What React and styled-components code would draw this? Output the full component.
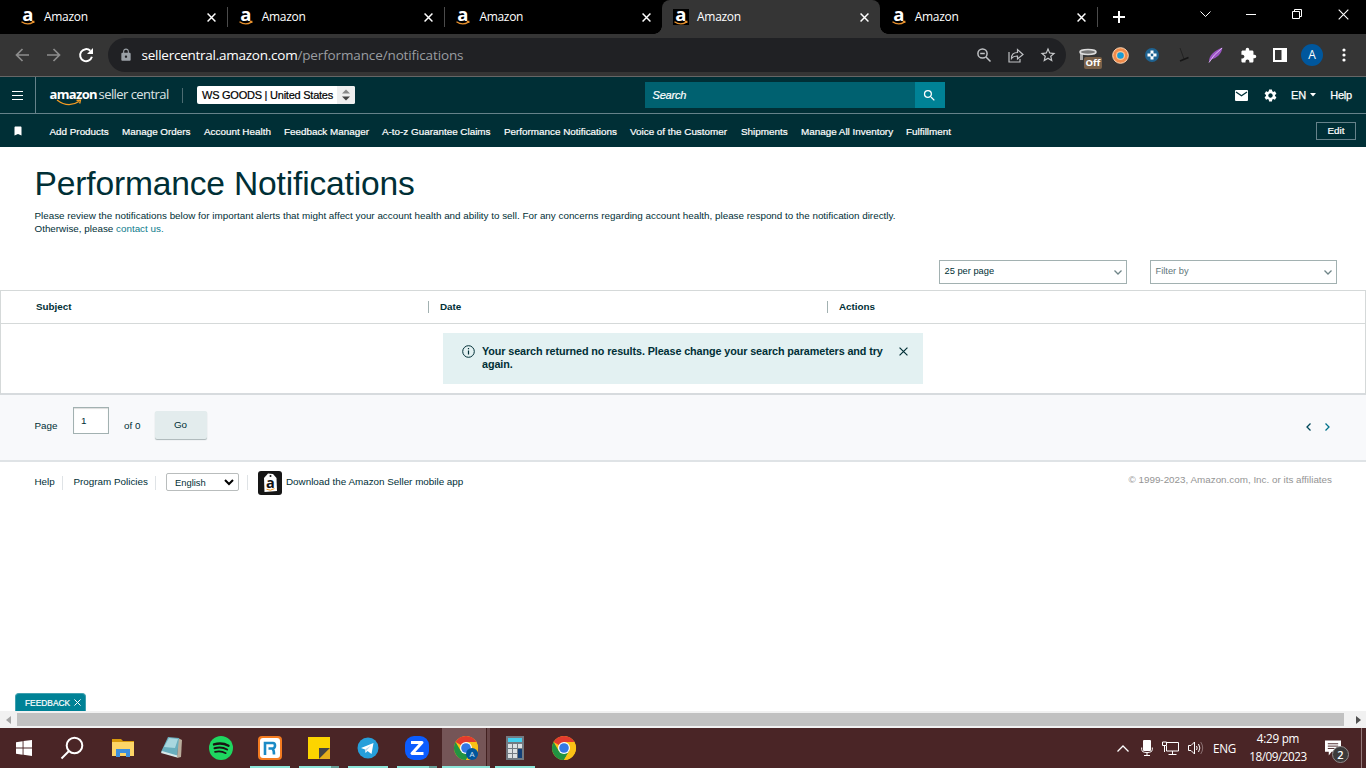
import React from "react";
import styled, { createGlobalStyle, css } from "styled-components";
import { MdExtension, MdSettings, MdBookmark, MdLock, MdSearch, MdStarBorder } from "react-icons/md";

const Global = createGlobalStyle`
  *, *::before, *::after { box-sizing: border-box; }
  html, body { margin: 0; height: 100%; overflow: hidden; background: #fff; }
  body { font-family: "Liberation Sans", Arial, sans-serif; color: #002f36; }
  svg { display: block; flex: none; overflow: visible; }
`;

const ui = `"Open Sans", "Noto Sans", sans-serif`;

const Screen = styled.div`
  width: 1366px;
  height: 768px;
  display: flex;
  flex-direction: column;
  overflow: hidden;
`;

const Label = styled.span`
  white-space: nowrap;
  letter-spacing: ${(p) => p.$ls || 0}px;
`;

/* ---------- tab strip ---------- */
const TabStrip = styled.div`
  height: 34px;
  background: #000;
  display: flex;
  padding-left: 9px;
  color: #fff;
`;

const Tab = styled.div`
  position: relative;
  width: 217.7px;
  flex: none;
  display: flex;
  align-items: center;
  padding: 0 11px 0 11px;
  font: 12px ${ui};
  background: ${(p) => (p.$active ? "#353535" : "transparent")};
  border-radius: 8px 8px 0 0;
  ${(p) =>
    p.$active &&
    css`
      &::before,
      &::after {
        content: "";
        position: absolute;
        bottom: 0;
        width: 8px;
        height: 8px;
      }
      &::before {
        left: -8px;
        background: radial-gradient(circle at 0 0, transparent 7.5px, #353535 8px);
      }
      &::after {
        right: -8px;
        background: radial-gradient(circle at 100% 0, transparent 7.5px, #353535 8px);
      }
    `}
`;

const TabTitle = styled(Label)`
  flex: 1;
  margin-left: 8px;
  padding-bottom: 2px;
`;

const TabRule = styled.i`
  width: 1px;
  height: 20px;
  margin: 7px -1px 0 0;
  background: #4b4b4b;
  flex: none;
`;

const Favicon = styled.span`
  width: 16px;
  height: 16px;
  background: #000;
  flex: none;
`;

const NewTab = styled.div`
  display: flex;
  align-items: center;
  padding-left: 16px;
  flex: 1;
`;

const WindowButtons = styled.div`
  display: flex;
  width: 184px;
  flex: none;
  height: 28px;
`;

const WindowButton = styled.span`
  flex: 1;
  display: grid;
  place-items: center;
`;

/* ---------- browser toolbar ---------- */
const Toolbar = styled.div`
  height: 43px;
  background: #353535;
  border-bottom: 1px solid #666;
  display: flex;
  align-items: center;
  padding-left: 6px;
`;

const ToolCell = styled.span`
  position: relative;
  width: 32px;
  height: 32px;
  display: grid;
  place-items: center;
  flex: none;
`;

const Omnibox = styled.div`
  margin: 0 6px 0 6px;
  width: 958px;
  height: 34px;
  border-radius: 17px;
  background: #202124;
  display: flex;
  align-items: center;
  padding: 0 2px 0 11px;
  font: 13.5px ${ui};
  color: #9a9da1;
`;

const Url = styled.span`
  flex: 1;
  margin-left: 8.5px;
  display: flex;
`;

const Host = styled(Label)`
  color: #fff;
`;

const OffBadge = styled.span`
  position: absolute;
  left: 12px;
  top: 18px;
  width: 18px;
  height: 12px;
  border-radius: 2px;
  background: #7a6149;
  color: #fff;
  font: bold 9.5px/12px ${ui};
  text-align: center;
`;

const Avatar = styled.span`
  width: 22px;
  height: 22px;
  border-radius: 50%;
  background: #00579d;
  color: #fff;
  font: 12px/22px ${ui};
  text-align: center;
`;

/* ---------- seller central header ---------- */
const Header = styled.header`
  height: 37px;
  background: #002f36;
  border-bottom: 1px solid #66828a;
  display: flex;
  align-items: center;
  color: #fff;
`;

const MenuButton = styled.div`
  width: 36px;
  height: 36px;
  border-right: 1px solid #66828a;
  display: grid;
  place-items: center;
`;

const Brand = styled.div`
  position: relative;
  width: 120px;
  margin-left: 13.5px;
  height: 24px;
  display: flex;
  font: 13px/22px ${ui};
  svg { position: absolute; left: 7px; top: 16px; }
`;

const BrandName = styled(Label)`
  font-weight: ${(p) => (p.$strong ? 700 : 400)};
  width: ${(p) => (p.$strong ? "49px" : "auto")};
  color: ${(p) => (p.$strong ? "#fff" : "#dde4e5")};
`;

const HeaderRule = styled.i`
  width: 1px;
  height: 15px;
  background: #4d6c72;
  margin: 0 14px 0 12px;
`;

const MarketSelect = styled.div`
  width: 158px;
  height: 18px;
  border-radius: 2px;
  background: #fff;
  color: #000;
  display: flex;
  align-items: center;
  font-size: 11px;
  padding-left: 5.5px;
  -webkit-text-stroke: 0.2px;
`;

const MarketText = styled(Label)`
  flex: 1;
`;

const Spinner = styled.span`
  width: 18px;
  height: 18px;
  background: #efefef;
  border-radius: 0 2px 2px 0;
  display: grid;
  place-items: center;
`;

const SearchBox = styled.div`
  margin-left: 290px;
  width: 300px;
  height: 26px;
  background: #006170;
  display: flex;
  align-items: center;
  font: italic 11px "Liberation Sans", sans-serif;
  -webkit-text-stroke: 0.2px;
  padding-left: 8px;
`;

const SearchButton = styled.span`
  margin-left: auto;
  width: 30px;
  height: 26px;
  display: grid;
  place-items: center;
  background: #008296;
`;

const HeaderTools = styled.div`
  margin-left: auto;
  padding-right: 14px;
  display: flex;
  align-items: center;
  font-size: 11px;
  -webkit-text-stroke: 0.25px;
`;

const GearIcon = styled(MdSettings)`
  margin-left: 15px;
`;

const Language = styled.span`
  display: flex;
  align-items: center;
  gap: 4px;
  margin: 0 14px 0 13px;
`;

const Nav = styled.nav`
  height: 33px;
  background: #002f36;
  color: #fff;
  display: flex;
  align-items: center;
  font-size: 9.87px;
  padding: 0 10px 0 12px;
  -webkit-text-stroke: 0.2px;
`;

const NavLinks = styled.div`
  display: flex;
  margin-left: 25.5px;
  padding-top: 2px;
`;

const NavLink = styled(Label)`
  width: ${(p) => p.$w}px;
`;

const EditButton = styled.span`
  margin-left: auto;
  width: 40px;
  height: 18px;
  border: 1px solid #66828a;
  text-align: center;
  line-height: 16px;
`;

/* ---------- page ---------- */
const Page = styled.main`
  height: 564px;
  background: #fff;
  display: flex;
  flex-direction: column;
  font-size: 9.85px;
`;

const Title = styled.h1`
  margin: 18px 0 0 34.5px;
  font-weight: 400;
  font-size: 33.6px;
  line-height: 38px;
`;

const Intro = styled.p`
  margin: 6px 0 0 34.5px;
  line-height: 13px;
  display: flex;
  flex-direction: column;
`;

const Link = styled.a`
  color: #0b7b8c;
`;

const Filters = styled.div`
  margin-top: 25px;
  padding-right: 29px;
  display: flex;
  justify-content: flex-end;
  gap: 23px;
`;

const Dropdown = styled.div`
  width: ${(p) => p.$w}px;
  height: 24px;
  border: 1px solid #a2b1b1;
  display: flex;
  justify-content: space-between;
  align-items: center;
  padding: 0 4px 3px 4.5px;
  font-size: 9.3px;
  color: ${(p) => (p.$muted ? "#5f767a" : "#002f36")};
  svg { margin-top: 4px; }
`;

const Table = styled.section`
  margin-top: 6px;
  height: 105px;
  border: 1px solid #d5d9d9;
  border-bottom: 2px solid #d7dbde;
`;

const HeadRow = styled.div`
  height: 33px;
  border-bottom: 1px solid #d5d9d9;
  display: flex;
  align-items: center;
  font-weight: 700;
`;

const HeadCell = styled.div`
  width: ${(p) => p.$w}px;
  padding-left: ${(p) => (p.$first ? 35 : 11)}px;
  height: 12px;
  line-height: 11px;
  border-left: ${(p) => (p.$first ? "none" : "1px solid #a2b1b1")};
`;

const Alert = styled.div`
  margin: 9px auto 0;
  width: 480px;
  height: 51px;
  background: #e3f1f2;
  display: flex;
  padding: 12px 15px 0 19px;
  font-size: 10.8px;
  line-height: 13px;
  font-weight: 700;
`;

const AlertText = styled.div`
  flex: 1;
  margin-left: 7px;
  display: flex;
  flex-direction: column;
`;

const AlertClose = styled.span`
  padding-top: 2px;
`;

const Pager = styled.div`
  height: 67px;
  background: #f8f9fb;
  border-bottom: 2px solid #dfe3e6;
  display: flex;
  align-items: flex-start;
  padding: 12px 36px 0 34.5px;
`;

const PagerText = styled(Label)`
  margin-top: 13px;
  width: ${(p) => p.$w}px;
`;

const PageInput = styled.span`
  width: 36px;
  height: 27px;
  border: 1px solid #a2b1b1;
  background: #fff;
  box-shadow: inset 0 1px 1px #ddd;
  padding-left: 7px;
  line-height: 26px;
  margin-right: 15px;
`;

const GoButton = styled.span`
  margin-top: 4px;
  width: 52px;
  height: 28px;
  border-radius: 2px;
  background: #e3eced;
  box-shadow: 0 1px 1px #a9b4b6;
  text-align: center;
  line-height: 28px;
`;

const Arrows = styled.span`
  margin: 16px 0 0 auto;
  display: flex;
  gap: 14px;
`;

const Footer = styled.footer`
  display: flex;
  align-items: center;
  height: 41px;
  padding: 0 34px 0 34.5px;
`;

const FooterCell = styled.span`
  width: ${(p) => p.$w}px;
  padding-left: ${(p) => p.$pad || 0}px;
  height: 14px;
  line-height: 12px;
  border-right: 1px solid #dfe3e6;
`;

const LanguageSelect = styled.span`
  width: 73px;
  height: 18px;
  margin: -1px 8px 0 10px;
  border: 1px solid #b9bdbd;
  border-radius: 2px;
  display: flex;
  align-items: center;
  justify-content: space-between;
  padding: 0 4px 0 8px;
  font-size: 9.4px;
`;

const FooterRule = styled.i`
  width: 1px;
  height: 15px;
  background: #dfe3e6;
  margin-right: 10px;
`;

const AppLink = styled(Label)`
  margin-left: 4px;
  padding-bottom: 2px;
`;

const Copyright = styled(Label)`
  margin: -6px 0 0 auto;
  color: #949494;
`;

const Feedback = styled.div`
  margin: auto 0 0 15px;
  width: 71px;
  height: 18px;
  border-radius: 4px 4px 0 0;
  background: #008296;
  border: 1px solid #3fa0af;
  border-bottom: 0;
  color: #fff;
  display: flex;
  align-items: center;
  justify-content: space-between;
  padding: 0 4.5px 0 9px;
  font-size: 8.4px;
  -webkit-text-stroke: 0.2px;
`;

const ScrollBar = styled.div`
  height: 17px;
  background: #f1f1f1;
  display: flex;
  align-items: center;
  justify-content: space-between;
  padding: 0 5px 0 6px;
`;

const Thumb = styled.span`
  width: 1327px;
  height: 13px;
  margin: 0 auto 0 6px;
  background: #c1c1c1;
`;

/* ---------- taskbar ---------- */
const Taskbar = styled.div`
  height: 40px;
  background: #4a2526;
  display: flex;
  color: #fff;
  font-family: ${ui};
`;

const Task = styled.span`
  width: 49px;
  height: 40px;
  flex: none;
  display: grid;
  place-items: center;
  grid-template-rows: 38px 2px;
  background: ${(p) => (p.$active ? "linear-gradient(90deg, transparent 1px, #755557 1px 45px, #422020 45px 46px, #674547 46px 49px)" : "none")};
  > svg { margin-top: 2px; }
`;

const RunningBar = styled.i`
  width: ${(p) => (p.$wide ? 48 : 40)}px;
  height: 2px;
  background: ${(p) => (p.$stack ? "linear-gradient(90deg, #8ce5d9 32px, #659e96 32px)" : "#8ce5d9")};
`;

const Tray = styled.div`
  margin-left: auto;
  display: flex;
  align-items: center;
  font-size: 11.7px;
`;

const TrayIcons = styled.div`
  display: flex;
  align-items: center;
  margin: 0 9px 0 12px;
  gap: 9px;
`;

const Clock = styled.div`
  width: 84px;
  padding-bottom: 2px;
  display: flex;
  flex-direction: column;
  align-items: center;
  line-height: 18px;
`;

const Notices = styled.span`
  position: relative;
  width: 42px;
  height: 40px;
  padding: 12px 0 0 5px;
  border-right: 1px solid #93797a;
  margin-right: 4px;
`;

const NoticeCount = styled.span`
  position: absolute;
  left: 12px;
  top: 18px;
  width: 17px;
  height: 17px;
  border: 1px solid #8f8b8b;
  border-radius: 50%;
  background: #3c3a3a;
  font: 600 11px/15px ${ui};
  text-align: center;
`;

const Cross = ({ s = 8, w = 1.5, c = "#fff" }) => (
  <svg width={s} height={s} viewBox="0 0 8 8" stroke={c} strokeWidth={(w * 8) / s}>
    <path d="M.5.5l7 7M7.5.5l-7 7" />
  </svg>
);

const AmazonIcon = () => (
  <Favicon>
    <svg width="16" height="16" viewBox="0 0 16 16">
      <text x="7.8" y="11.5" textAnchor="middle" fontFamily="Open Sans" fontWeight="700" fontSize="18.5" fill="#fff">a</text>
      <path d="M1.500 12.700q6 4.200 11.800.4M11.800 12.500h2v1.600" fill="none" stroke="#e8912d" strokeWidth="1.3" />
    </svg>
  </Favicon>
);

const Chevron = ({ d, w = 8, h = 5, c = "#6f8588", s = 1.3 }) => (
  <svg width={w} height={h} viewBox={`0 0 ${w} ${h}`} fill="none" stroke={c} strokeWidth={s}>
    <path d={d} />
  </svg>
);

const ChromeIcon = ({ badge }) => (
  <svg width="26" height="26" viewBox="0 0 26 26">
    <circle cx="13" cy="13" r="12" fill="#fbc116" />
    <path d="M13 13L2.6 7A12 12 0 0 1 23.4 7z" fill="#e33b2e" />
    <path d="M2.6 7A12 12 0 0 0 13 25L18.2 16L13 13L7.8 16z" fill="#229342" />
    <path d="M13 7h10.4A12 12 0 0 1 13 25l5.2-9z" fill="#fbc116" />
    <circle cx="13" cy="13" r="6" fill="#fff" />
    <circle cx="13" cy="13" r="4.8" fill="#3478e5" />
    {badge && (
      <g>
        <circle cx="19" cy="19" r="6" fill="#00579d" />
        <text x="19" y="22" textAnchor="middle" fontFamily="Open Sans" fontSize="8" fill="#cfe2f5">A</text>
      </g>
    )}
  </svg>
);

const extensions = [
  <ToolCell key="off">
    <svg width="22" height="20" viewBox="0 0 22 20">
      <path d="M3 6h3v9H3z" fill="#aaa" />
      <ellipse cx="11" cy="7" rx="8" ry="2.500" fill="#777" stroke="#ddd" strokeWidth="1.6" />
    </svg>
    <OffBadge>Off</OffBadge>
  </ToolCell>,
  <ToolCell key="ring">
    <svg width="17" height="17" viewBox="0 0 17 17">
      <circle cx="8.5" cy="8.5" r="7.800" fill="#f08b4b" stroke="#ffd8b5" />
      <circle cx="8.5" cy="8.5" r="4.6" fill="#f9c596" />
      <circle cx="8.5" cy="8.5" r="3.3" fill="#169bd7" />
    </svg>
  </ToolCell>,
  <ToolCell key="cross">
    <svg width="14" height="14" viewBox="0 0 14 14">
      <circle cx="7" cy="7" r="7" fill="#1f6391" />
      <path d="M5.5 2.5h3v3h3v3h-3v3h-3v-3h-3v-3h3z" fill="#fff" />
      <circle cx="7" cy="7" r="1.4" fill="#1f6391" />
    </svg>
  </ToolCell>,
  <ToolCell key="line">
    <svg width="12" height="16" viewBox="0 0 12 16" stroke="#161616">
      <path d="M2 1l4 11" strokeWidth=".6" /><path d="M2 14l8.500-3.500" strokeWidth="1.700" />
    </svg>
  </ToolCell>,
  <ToolCell key="feather">
    <svg width="16" height="18" viewBox="0 0 16 18">
      <path d="M1 16C1 9 6 5 14.500 1.500C13.500 8 9 12 3 13.500z" fill="#9a55c4" />
      <path d="M1 16.500Q5 9 14 2" stroke="#dfb8f5" fill="none" />
    </svg>
  </ToolCell>,
  <ToolCell key="puzzle"><MdExtension size={17} color="#fff" /></ToolCell>,
  <ToolCell key="panel">
    <svg width="14" height="14" viewBox="0 0 14 14"><path d="M0 0h14v14H0z" fill="#fff" /><path d="M2 2h6.5v10H2z" fill="#353535" /></svg>
  </ToolCell>,
  <ToolCell key="me"><Avatar>A</Avatar></ToolCell>,
  <ToolCell key="more">
    <svg width="4" height="14" viewBox="0 0 4 14" fill="#fff"><circle cx="2" cy="2" r="1.6" /><circle cx="2" cy="7" r="1.6" /><circle cx="2" cy="12" r="1.6" /></svg>
  </ToolCell>,
];

const navItems = [
  ["Add Products", 72.5], ["Manage Orders", 82], ["Account Health", 80], ["Feedback Manager", 98],
  ["A-to-z Guarantee Claims", 122], ["Performance Notifications", 126], ["Voice of the Customer", 111],
  ["Shipments", 60], ["Manage All Inventory", 105], ["Fulfillment", 50],
];

const tasks = [
  { icon: <svg width="18" height="16" viewBox="0 0 18 16" fill="#fff"><path d="M0 2.2L6.6 1.2V7.5H0zM7.5 1.1L16 0v7.5H7.5zM0 8.4h6.6v6.4L0 13.8zM7.5 8.4H16V16l-8.5-1.2z" /></svg> },
  { icon: <svg width="27" height="24" viewBox="0 0 27 24" fill="none" stroke="#fff" strokeWidth="2"><circle cx="14.5" cy="9.5" r="7.8" /><path d="M9 15l-7.5 7.5" /></svg> },
  { icon: <svg width="22" height="18" viewBox="0 0 22 18"><path d="M0 0h9l2 2h11v15H0z" fill="#d99a0c" /><path d="M0 3h22v14H0z" fill="#fdd567" /><path d="M4 18v-8h14v8h-4v-4H8v4z" fill="#3d8fdd" /></svg> },
  { icon: <svg width="24" height="24" viewBox="0 0 24 24"><path d="M18 2l4 2-1 17-4 1z" fill="#b9ad9c" /><path d="M8 1l11 1-2 19L1 16z" fill="#69aebd" /><path d="M9 2l9 1-3 9-11-1z" fill="#a9d7df" /><path d="M1 17l16 4.500.3-2L2 15z" fill="#d7e8e9" /></svg> },
  { icon: <svg width="24" height="24" viewBox="0 0 24 24"><circle cx="12" cy="12" r="12" fill="#1ed760" /><g fill="none" stroke="#191414" strokeLinecap="round"><path d="M5 8.4q8-2.3 14.5 1.3" strokeWidth="2.4" /><path d="M5.5 12.3q7-1.9 12.6 1.2" strokeWidth="2" /><path d="M6 15.9q6-1.4 10.8 1.3" strokeWidth="1.6" /></g></svg> },
  { run: 1, icon: <svg width="24" height="24" viewBox="0 0 24 24"><rect width="24" height="24" rx="4" fill="#f47b20" /><rect x="2" y="2" width="20" height="20" rx="3" fill="#fff" /><path d="M7 19V7h8q2 0 2 2.500t-2 3h-4.500M14.500 12.500q1.500 1.500 1.500 6" fill="none" stroke="#1a8ac6" strokeWidth="2.600" /></svg> },
  { run: 1, stack: 1, icon: <svg width="22" height="22" viewBox="0 0 22 22"><path d="M0 0h22v11L11 22H0z" fill="#fcd500" /><path d="M11 22V11h11z" fill="#444" /><path d="M11 22h11V11z" fill="#e5b01c" /></svg> },
  { run: 1, icon: <svg width="22" height="22" viewBox="0 0 22 22"><circle cx="11" cy="11" r="10.5" fill="#269fda" /><path d="M4 11l12.500-5-2 11-4-3-2 2-.5-3.600z" fill="#fff" /><path d="M8 12.500l6-4-4.500 5-1 2z" fill="#b9d9ec" /></svg> },
  { run: 1, stack: 1, icon: <svg width="24" height="24" viewBox="0 0 24 24"><rect width="24" height="24" rx="9" fill="#0b5cff" /><path d="M6 6.500h11L7 17.500h11.500" fill="none" stroke="#fff" strokeWidth="3" strokeLinejoin="round" /></svg> },
  { run: 1, active: 1, wide: 1, icon: <ChromeIcon badge /> },
  { run: 1, icon: <svg width="18" height="24" viewBox="0 0 18 24"><path d="M0 0h18v24H0z" fill="#737a82" /><path d="M2 2h14v4H2z" fill="#45cfee" /><g fill="#dce0e3"><path d="M2 8h4v4H2zM7 8h4v4H7zM12 8h4v4h-4zM2 13h4v4H2zM7 13h4v4H7zM2 18h4v4H2zM7 18h4v4H7z" /></g><path d="M12 13h4v9h-4z" fill="#123f78" /></svg> },
  { icon: <ChromeIcon /> },
];

export default function App() {
  return (
    <Screen>
      <Global />
      <TabStrip>
        {[0, 1, 2, 3, 4].map((i) => (
          <React.Fragment key={i}>
            <Tab $active={i === 3}>
              <AmazonIcon />
              <TabTitle $ls={-0.3}>Amazon</TabTitle>
              <Cross s={9} w={1.5} />
            </Tab>
            {(i < 2 || i === 4) && <TabRule />}
          </React.Fragment>
        ))}
        <NewTab>
          <svg width="12" height="12" viewBox="0 0 12 12" stroke="#fff" strokeWidth="2"><path d="M6 0v12M0 6h12" /></svg>
        </NewTab>
        <WindowButtons>
          <WindowButton><Chevron w={11} h={6} d="M.5.5l5 5 5-5" c="#fff" s={1} /></WindowButton>
          <WindowButton><svg width="10" height="1"><path d="M0 .5h10" stroke="#fff" /></svg></WindowButton>
          <WindowButton><svg width="10" height="10" fill="none" stroke="#fff"><path d="M.5 2.500h7v7h-7zM2.500 2.500v-2h7v7h-2" /></svg></WindowButton>
          <WindowButton><Cross s={11} w={1.1} /></WindowButton>
        </WindowButtons>
      </TabStrip>

      <Toolbar>
        <ToolCell><svg width="14" height="14" viewBox="0 0 14 14" fill="none" stroke="#8d8d8d" strokeWidth="1.700"><path d="M14 7H1.500M7.500 1L1.500 7l6 6" /></svg></ToolCell>
        <ToolCell><svg width="14" height="14" viewBox="0 0 14 14" fill="none" stroke="#8d8d8d" strokeWidth="1.700"><path d="M0 7h12.500M6.500 1l6 6-6 6" /></svg></ToolCell>
        <ToolCell>
          <svg width="14" height="14" viewBox="0 0 14 14">
            <path d="M12.900 8.800A6 6 0 1 1 11.300 2.800" fill="none" stroke="#fff" strokeWidth="2" />
            <path d="M14 0v6H8z" fill="#fff" />
          </svg>
        </ToolCell>
        <Omnibox>
          <MdLock size={14} color="#9aa0a6" />
          <Url><Host $ls={-0.25}>sellercentral.amazon.com</Host><Label $ls={-0.13}>/performance/notifications</Label></Url>
          <ToolCell><svg width="14" height="14" viewBox="0 0 14 14" fill="none" stroke="#bfc1c4" strokeWidth="1.500"><circle cx="5.500" cy="5.500" r="4.600" /><path d="M9 9l4.500 4.500M3.200 5.500h4.600" /></svg></ToolCell>
          <ToolCell><svg width="16" height="15" viewBox="0 0 16 15" fill="none" stroke="#bfc1c4" strokeWidth="1.200"><path d="M1 4v10h11v-3M3.500 10.500q0-6 6-6V1.500L15 6.500l-5.500 4.500V8q-4-.2-6 2.500z" /></svg></ToolCell>
          <ToolCell><MdStarBorder size={18} color="#c6c8ca" /></ToolCell>
        </Omnibox>
        {extensions}
      </Toolbar>

      <Header>
        <MenuButton><svg width="11" height="9" stroke="#fff" strokeWidth="1.200"><path d="M0 .5h11M0 4.500h11M0 8.500h11" /></svg></MenuButton>
        <Brand>
          <BrandName $strong $ls={-0.65}>amazon</BrandName>
          <BrandName $ls={-0.56}>seller central</BrandName>
          <svg width="26" height="8" viewBox="0 0 26 8" fill="none" stroke="#f59b23" strokeWidth="1.300"><path d="M0 1q11 8.500 22 1.500M19.500 1.500l4-.5-.8 3.500" /></svg>
        </Brand>
        <HeaderRule />
        <MarketSelect>
          <MarketText $ls={-0.24}>WS GOODS | United States</MarketText>
          <Spinner><svg width="8" height="12" viewBox="0 0 8 12"><path d="M0 4.500L4 .5l4 4z" fill="#888" /><path d="M0 7.500l4 4 4-4z" fill="#444" /></svg></Spinner>
        </MarketSelect>
        <SearchBox><Label $ls={-0.2}>Search</Label><SearchButton><MdSearch size={15} color="#fff" /></SearchButton></SearchBox>
        <HeaderTools>
          <svg width="13" height="11" viewBox="0 0 13 11"><rect width="13" height="11" rx="1" fill="#fff" /><path d="M1 2l5.500 3.700L12 2" fill="none" stroke="#002f36" strokeWidth="1.300" /></svg>
          <GearIcon size={15} color="#fff" />
          <Language><Label>EN</Label><svg width="6" height="4"><path d="M0 0h6L3 3.500z" fill="#fff" /></svg></Language>
          <Label $ls={-0.2}>Help</Label>
        </HeaderTools>
      </Header>
      <Nav>
        <MdBookmark size={12} color="#fff" />
        <NavLinks>
          {navItems.map(([t, w]) => <NavLink key={t} $w={w}>{t}</NavLink>)}
        </NavLinks>
        <EditButton>Edit</EditButton>
      </Nav>

      <Page>
        <Title><Label $ls={-0.17}>Performance Notifications</Label></Title>
        <Intro>
          <Label>Please review the notifications below for important alerts that might affect your account health and ability to sell. For any concerns regarding account health, please respond to the notification directly.</Label>
          <Label>Otherwise, please <Link>contact us.</Link></Label>
        </Intro>
        <Filters>
          <Dropdown $w={188}><Label>25 per page</Label><Chevron d="M.5.5L4 4 7.500.5" /></Dropdown>
          <Dropdown $w={187} $muted><Label>Filter by</Label><Chevron d="M.5.5L4 4 7.500.5" /></Dropdown>
        </Filters>
        <Table>
          <HeadRow>
            <HeadCell $w={427} $first><Label>Subject</Label></HeadCell>
            <HeadCell $w={399}><Label>Date</Label></HeadCell>
            <HeadCell $w={500}><Label>Actions</Label></HeadCell>
          </HeadRow>
          <Alert>
            <svg width="13" height="13" viewBox="0 0 13 13" fill="none" stroke="#002f36"><circle cx="6.500" cy="6.500" r="5.800" /><path d="M6.500 5.500v4M6.500 3v1.300" strokeWidth="1.200" /></svg>
            <AlertText>
              <Label $ls={-0.1}>Your search returned no results. Please change your search parameters and try</Label>
              <Label $ls={-0.1}>again.</Label>
            </AlertText>
            <AlertClose><Cross s={9} w={1.2} c="#002f36" /></AlertClose>
          </Alert>
        </Table>
        <Pager>
          <PagerText $w={38.5}>Page</PagerText>
          <PageInput>1</PageInput>
          <PagerText $w={30.5}>of 0</PagerText>
          <GoButton>Go</GoButton>
          <Arrows>
            <Chevron w={5} h={8} d="M4.500.5L1 4l3.500 3.500" c="#00485a" />
            <Chevron w={5} h={8} d="M.5.5L4 4 .5 7.500" c="#00728a" />
          </Arrows>
        </Pager>
        <Footer>
          <FooterCell $w={28.5}><Label>Help</Label></FooterCell>
          <FooterCell $w={93} $pad={10.5}><Label>Program Policies</Label></FooterCell>
          <LanguageSelect><Label>English</Label><Chevron w={10} h={7} d="M1 1l4 4 4-4" c="#000" s={2} /></LanguageSelect>
          <FooterRule />
          <svg width="24" height="24" viewBox="0 0 24 24">
            <rect width="24" height="24" rx="3" fill="#161616" />
            <path d="M6 7l4-4.500 5 .5 3.500 4 .5 13-12.500 1z" fill="#fff" />
            <circle cx="12.500" cy="5" r="1" fill="#161616" />
            <text x="12.300" y="16.500" textAnchor="middle" fontFamily="Open Sans" fontWeight="700" fontSize="14.500" fill="#111">a</text>
            <path d="M8.500 18.300q4 2 8-.7" fill="none" stroke="#f59b23" />
          </svg>
          <AppLink>Download the Amazon Seller mobile app</AppLink>
          <Copyright>© 1999-2023, Amazon.com, Inc. or its affiliates</Copyright>
        </Footer>
        <Feedback><Label>FEEDBACK</Label><Cross s={7} w={1} /></Feedback>
      </Page>

      <ScrollBar>
        <svg width="5" height="8"><path d="M5 0v8L0 4z" fill="#a3a3a3" /></svg>
        <Thumb />
        <svg width="5" height="8"><path d="M0 0v8l5-4z" fill="#505050" /></svg>
      </ScrollBar>

      <Taskbar>
        {tasks.map((t, i) => (
          <Task key={i} $active={t.active}>{t.icon}{t.run && <RunningBar $wide={t.wide} $stack={t.stack} />}</Task>
        ))}
        <Tray>
          <Chevron w={12} h={7} d="M.5 6.500l5.500-5.500 5.500 5.500" c="#fff" />
          <TrayIcons>
            <svg width="12" height="16" viewBox="0 0 12 16"><rect x="2" y="0" width="8" height="11" rx="1" fill="#fff" /><path d="M.7 7.500v2q0 3 5.300 3t5.300-3v-2M6 12.500v3M3 15.500h6" fill="none" stroke="#fff" /></svg>
            <svg width="17" height="14" viewBox="0 0 17 14" fill="none" stroke="#fff"><path d="M5 1.500h11.500v8.500H4.500V5M10.500 10v3M6.500 13.500h8M.5 1h4v3.500h-4zM2.500 4.500v6.500" /></svg>
            <svg width="16" height="14" viewBox="0 0 16 14" fill="none" stroke="#fff"><path d="M.5 4.500h2.500l3.500-3.500v12l-3.500-3.500H.5zM8.500 5q1.300 2 0 4M10.500 3q2.800 4 0 8" /><path d="M12.700 1q4 6 0 12" stroke="#8c7172" /></svg>
          </TrayIcons>
          <Label $ls={-0.3}>ENG</Label>
          <Clock><Label $ls={-0.25}>4:29 pm</Label><Label $ls={-0.45}>18/09/2023</Label></Clock>
          <Notices>
            <svg width="16" height="16" viewBox="0 0 17 16"><path d="M0 0h17v12H7l-3 4v-4H0z" fill="#fff" /><path d="M3 3.500h11M3 6h11M3 8.500h7" stroke="#4a2526" /></svg>
            <NoticeCount>2</NoticeCount>
          </Notices>
        </Tray>
      </Taskbar>
    </Screen>
  );
}
